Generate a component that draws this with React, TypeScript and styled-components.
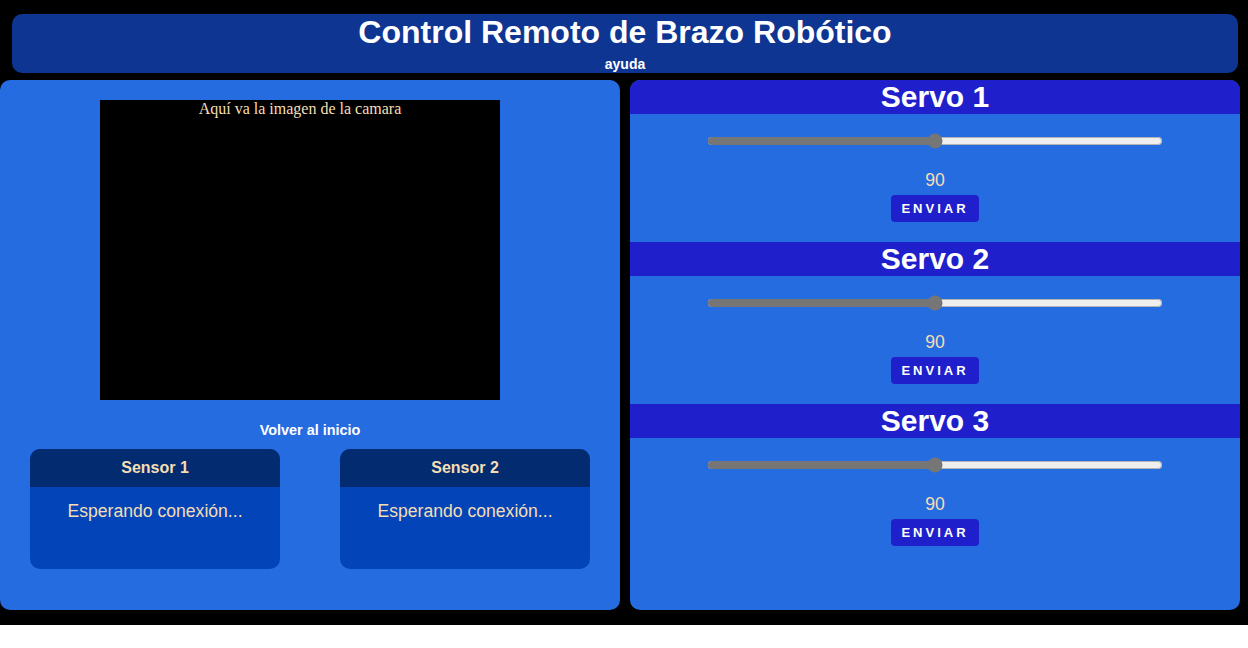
import React from "react";
import styled, { createGlobalStyle } from "styled-components";

const Global = createGlobalStyle`
  html, body { margin: 0; padding: 0; background: #ffffff; }
  body { font-family: "Liberation Sans", Arial, sans-serif; }
  * { box-sizing: border-box; }
`;

const Page = styled.div`
  background: #000000;
  padding: 14px 0 15px 0;
`;

const Header = styled.header`
  margin: 0 10px 7px 12px;
  height: 59px;
  background: #0d3591;
  border-radius: 10px;
  display: flex;
  flex-direction: column;
  align-items: center;
  color: #ffffff;
`;

const Title = styled.h1`
  margin: 0;
  font-size: 32px;
  line-height: 36px;
  font-weight: bold;
`;

const Help = styled.a`
  margin-top: 6px;
  font-size: 14px;
  line-height: 16px;
  font-weight: bold;
  color: #ffffff;
  text-decoration: none;
`;

const Main = styled.main`
  display: grid;
  grid-template-columns: 620px 610px;
  column-gap: 10px;
`;

const Panel = styled.section`
  height: 530px;
  background: #266ce1;
  border-radius: 10px;
  overflow: hidden;
  display: flex;
  flex-direction: column;
`;

const Camera = styled.div`
  margin: 20px 0 0 100px;
  width: 400px;
  height: 300px;
  background: #000000;
  color: #f5deb3;
  font-family: "Liberation Serif", "Times New Roman", serif;
  font-size: 16px;
  line-height: 18px;
  text-align: center;
`;

const Back = styled.a`
  margin-top: 22px;
  text-align: center;
  font-size: 14.4px;
  line-height: 16px;
  font-weight: bold;
  color: #ffffff;
  text-decoration: none;
`;

const Sensors = styled.div`
  margin-top: 11px;
  display: flex;
  justify-content: space-around;
`;

const SensorCard = styled.div`
  width: 250px;
  height: 120px;
  background: #0444b9;
  border-radius: 10px;
  overflow: hidden;
  color: #f5deb3;
  text-align: center;
`;

const SensorHead = styled.div`
  height: 38px;
  line-height: 38px;
  background: #032b6f;
  font-size: 16px;
  font-weight: bold;
`;

const SensorBody = styled.div`
  padding-top: 14px;
  font-size: 17.6px;
  line-height: 20px;
`;

const Servo = styled.div`
  display: flex;
  flex-direction: column;
  align-items: center;
  padding-bottom: 20px;
`;

const ServoBand = styled.div`
  align-self: stretch;
  height: 34px;
  background: #201fcc;
  color: #ffffff;
  text-align: center;
  font-size: 30px;
  line-height: 34px;
  font-weight: bold;
`;

const Slider = styled.input`
  margin: 19px 0 0 0;
  width: 456px;
  height: 16px;
  accent-color: #767676;
`;

const Value = styled.div`
  margin-top: 21px;
  font-size: 17.6px;
  line-height: 20px;
  color: #f5deb3;
`;

const SendButton = styled.button`
  margin-top: 5px;
  height: 27px;
  padding: 0 10px;
  border: none;
  border-radius: 4px;
  background: #201fcc;
  color: #ffffff;
  font-family: "Liberation Sans", Arial, sans-serif;
  font-size: 13px;
  font-weight: bold;
  letter-spacing: 3px;
`;

const servos = [1, 2, 3];

export default function App() {
  return (
    <>
      <Global />
      <Page>
        <Header>
          <Title>Control Remoto de Brazo Robótico</Title>
          <Help href="#">ayuda</Help>
        </Header>
        <Main>
          <Panel>
            <Camera>Aquí va la imagen de la camara</Camera>
            <Back href="#">Volver al inicio</Back>
            <Sensors>
              {[1, 2].map((n) => (
                <SensorCard key={n}>
                  <SensorHead>Sensor {n}</SensorHead>
                  <SensorBody>Esperando conexión...</SensorBody>
                </SensorCard>
              ))}
            </Sensors>
          </Panel>
          <Panel>
            {servos.map((n) => (
              <Servo key={n}>
                <ServoBand>Servo {n}</ServoBand>
                <Slider type="range" min={0} max={180} defaultValue={90} />
                <Value>90</Value>
                <SendButton>ENVIAR</SendButton>
              </Servo>
            ))}
          </Panel>
        </Main>
      </Page>
    </>
  );
}
